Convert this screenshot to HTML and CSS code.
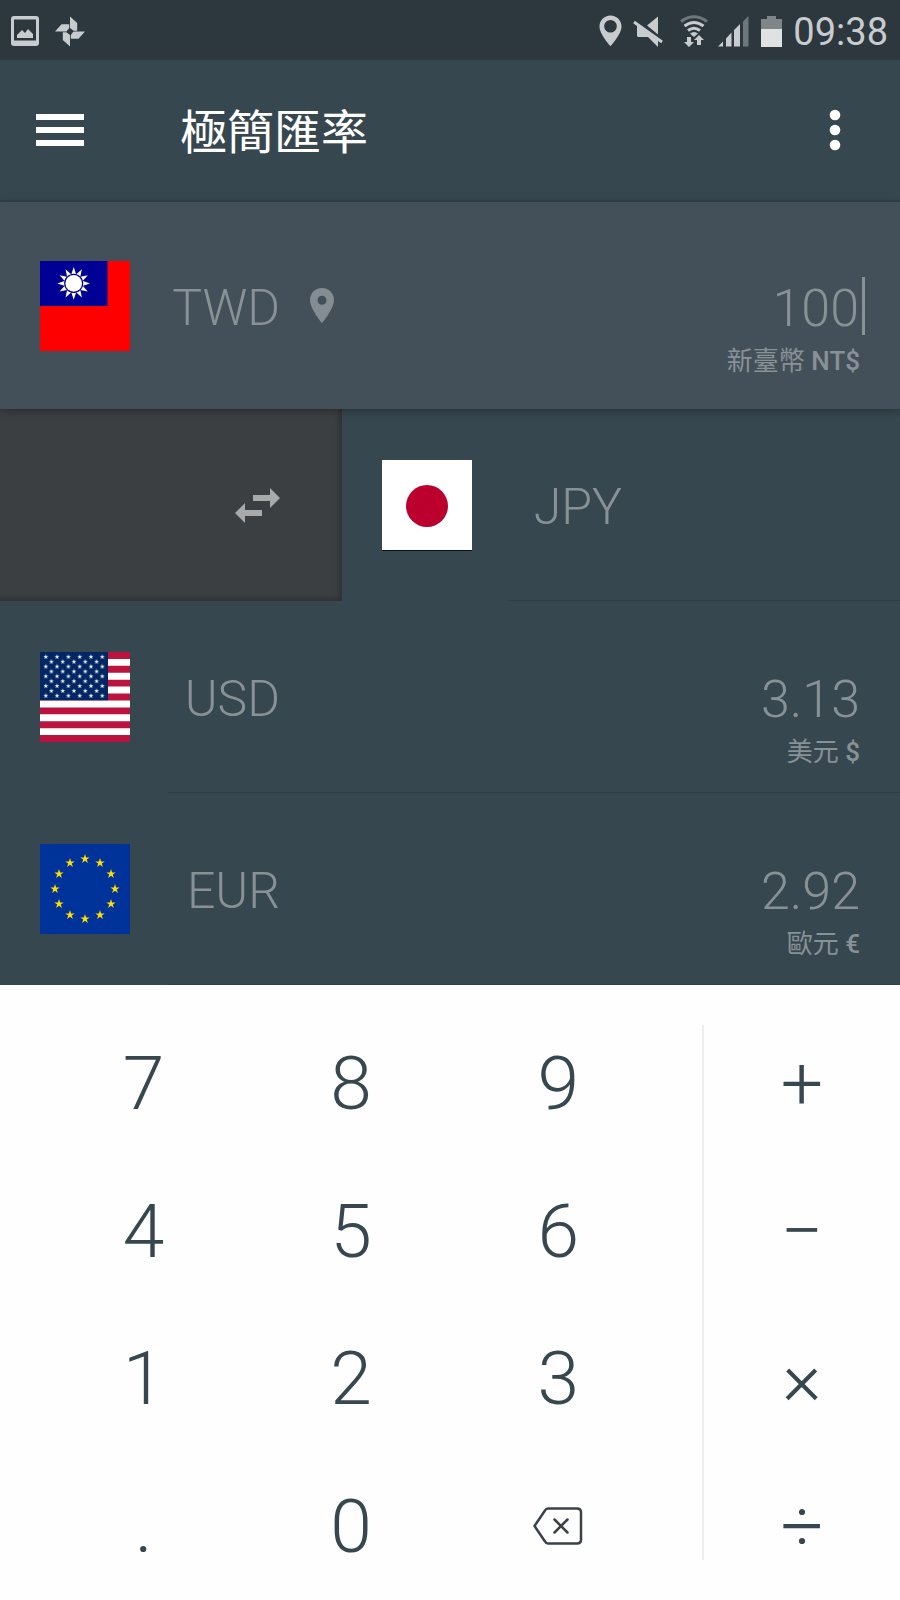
FILE: index.html
```html
<!DOCTYPE html>
<html lang="zh-Hant">
<head>
<meta charset="utf-8">
<meta name="viewport" content="width=device-width, initial-scale=1">
<title>極簡匯率</title>
<link rel="stylesheet" href="styles.css">
</head>
<body>
<div class="app">
  <div class="status">
    <svg class="status-icon" width="28" height="30" viewBox="0 0 28 30"><path fill="#c8ccce" fill-rule="evenodd" d="M3 0h22a3 3 0 0 1 3 3v24a3 3 0 0 1-3 3H3a3 3 0 0 1-3-3V3a3 3 0 0 1 3-3zM3 3.500V24.500H25V3.500zM6 22v-3l5-5 3 3 3-4 5 5v4z"/></svg>
    <svg class="status-icon pinwheel" width="30" height="31" viewBox="0 0 30 31"><g fill="#c8ccce"><path id="blade" d="M15 .500l7.200 6.500v7.700h-3.600L15 12z"/><use href="#blade" transform="rotate(90 15 15.500)"/><use href="#blade" transform="rotate(180 15 15.500)"/><use href="#blade" transform="rotate(270 15 15.500)"/></g></svg>
    <div class="status-right">
      <svg width="23" height="32" viewBox="0 0 23 32"><path fill="#c8ccce" fill-rule="evenodd" d="M11.500 0.500C5 0.500.500 5.500.500 11.500c0 8 11 19.700 11 19.700s11-11.700 11-19.700C22.500 5.500 18 .500 11.500.500zm0 4.500a6.300 6.300 0 1 1 0 12.600 6.300 6.300 0 0 1 0-12.600z"/></svg>
      <svg class="mute" width="30" height="31" viewBox="0 0 30 31"><path fill="#c8ccce" d="M25 .500v18L14 9.500zM4 9l21 14v8L15 21H5l-1-1z"/><path d="M1 6l28 20" stroke="#c8ccce" stroke-width="3"/></svg>
      <svg class="wifi" width="28" height="32" viewBox="0 0 28 32" fill="none" stroke="#c8ccce" stroke-width="3"><path stroke="#6e777c" d="M1 6.500Q14-3 27 6.500"/><path d="M4.500 11q9.500-7 19 0M8 15.500q6-4.500 12 0"/><path fill="#c8ccce" stroke="none" d="M10 18.500q4-3 8 0L14 22zM7 22h4v5h3l-5 5-5-5h3zM17 30v-5h-3l5-5 5 5h-3v5z"/></svg>
      <svg class="signal" width="31" height="31" viewBox="0 0 31 31"><path fill="#c8ccce" d="M0 30.500l5-5v5zM8 30.500v-8l5.500-6v14zM16 30.500V14l6-6v22.500z"/><path fill="#6e777c" d="M25 30.500V5.500L30.500 0v30.500z"/></svg>
      <svg class="battery" width="21" height="31" viewBox="0 0 21 31"><path fill="#7f8688" d="M0 3h6V0h9v3h6v10H0z"/><path fill="#dfe1e3" d="M0 13h21v18H0z"/></svg>
      <time class="clock">09:38</time>
    </div>
  </div>

  <header class="bar">
    <button class="icon-button" aria-label="選單"><svg width="48" height="34" viewBox="0 0 48 34"><path fill="#fff" d="M0 1h48v6H0zM0 14h48v6H0zM0 27h48v6H0z"/></svg></button>
    <h1 class="title">極簡匯率</h1>
    <button class="icon-button more" aria-label="更多"><svg width="12" height="42" viewBox="0 0 12 42" fill="#fff"><circle cx="6" cy="6" r="5.300"/><circle cx="6" cy="21" r="5.300"/><circle cx="6" cy="36" r="5.300"/></svg></button>
  </header>

  <main class="rates">
    <section class="row active">
      <svg class="flag" viewBox="0 0 90 90"><path fill="#f00" d="M0 0h90v90H0z"/><path fill="#000095" d="M0 0h67.500v45H0z"/>
        <g fill="#fff" transform="translate(33.700 22.400)"><circle r="8.300"/><g id="rays"><path id="ray" d="M-2.300-9.300L0-16.300 2.300-9.300Q0-10 -2.300-9.300z"/><use href="#ray" transform="rotate(30)"/><use href="#ray" transform="rotate(60)"/></g><use href="#rays" transform="rotate(90)"/><use href="#rays" transform="rotate(180)"/><use href="#rays" transform="rotate(270)"/></g></svg>
      <label class="code" for="amount">TWD</label>
      <svg class="pin" width="24" height="35" viewBox="0 0 24 35"><path fill="#838d93" fill-rule="evenodd" d="M12 0C5 0 0 5.500 0 12c0 9 12 23 12 23s12-14 12-23C24 5.500 19 0 12 0zm0 7.800a4.500 4.500 0 1 1 0 9 4.500 4.500 0 0 1 0-9z"/></svg>
      <div class="value"><input class="amount entry" id="amount" value="100" inputmode="none" readonly><span class="name">新臺幣 <span class="symbol">NT$</span></span></div>
    </section>

    <section class="row swiped">
      <button class="swap" aria-label="交換"><svg width="45" height="35" viewBox="0 0 45 35"><path fill="#a7a9aa" d="M18 7h17V0l10 10-10 10v-7H18zM27 22H10v-7L0 25l10 10v-7h17z"/></svg></button>
      <div class="row slid">
        <svg class="flag japan" viewBox="0 0 90 90"><path fill="#fff" d="M0 0h90v90H0z"/><circle cx="45" cy="46" r="21" fill="#bc002d"/></svg>
        <span class="code">JPY</span>
      </div>
    </section>

    <section class="row">
      <svg class="flag" viewBox="0 0 90 90"><defs><path id="star" d="M0-1L.225-.309H.951L.363.118.588.809 0 .382-.588.809-.363.118-.951-.309H-.225z"/><pattern id="stars" x="0.200" y="0" width="11.300" height="9.730" patternUnits="userSpaceOnUse"><use href="#star" fill="#fff" transform="translate(5.600 4.900) scale(2.600)"/></pattern><pattern id="stars2" x="5.800" y="4.900" width="11.300" height="9.730" patternUnits="userSpaceOnUse"><use href="#star" fill="#fff" transform="translate(5.600 4.900) scale(2.600)"/></pattern></defs>
        <path fill="#fff" d="M0 0h90v90H0z"/><path stroke="#bb133e" stroke-width="6.920" d="M0 3.460h90M0 17.300h90M0 31.150h90M0 45h90M0 58.850h90M0 72.700h90M0 86.540h90"/><path fill="#002664" d="M0 0h68v48.300H0z"/><path fill="url(#stars)" d="M.200 0h67.800v48.300H.200z"/><path fill="url(#stars2)" d="M5.800 4.900h56.500v38.900H5.800z"/></svg>
      <span class="code">USD</span>
      <div class="value"><output class="amount">3.13</output><span class="name">美元 <span class="symbol">$</span></span></div>
    </section>

    <section class="row">
      <svg class="flag" viewBox="0 0 90 90"><path fill="#039" d="M0 0h90v90H0z"/><g fill="#fd0"><use href="#star" transform="translate(45 15) scale(4.900)"/><use href="#star" transform="translate(60 19) scale(4.900)"/><use href="#star" transform="translate(71 30) scale(4.900)"/><use href="#star" transform="translate(75 45) scale(4.900)"/><use href="#star" transform="translate(71 60) scale(4.900)"/><use href="#star" transform="translate(60 71) scale(4.900)"/><use href="#star" transform="translate(45 75) scale(4.900)"/><use href="#star" transform="translate(30 71) scale(4.900)"/><use href="#star" transform="translate(19 60) scale(4.900)"/><use href="#star" transform="translate(15 45) scale(4.900)"/><use href="#star" transform="translate(19 30) scale(4.900)"/><use href="#star" transform="translate(30 19) scale(4.900)"/></g></svg>
      <span class="code">EUR</span>
      <div class="value"><output class="amount">2.92</output><span class="name">歐元 <span class="symbol">€</span></span></div>
    </section>
  </main>

  <div class="keypad">
    <div class="digits">
      <button class="key">7</button><button class="key">8</button><button class="key">9</button>
      <button class="key">4</button><button class="key">5</button><button class="key">6</button>
      <button class="key">1</button><button class="key">2</button><button class="key">3</button>
      <button class="key">.</button><button class="key">0</button>
      <button class="key" aria-label="刪除"><svg width="50" height="38" viewBox="0 0 50 38" fill="none" stroke="#3b4249" stroke-width="2.500" stroke-linejoin="round" stroke-linecap="round"><path d="M15 1.500h29q4 0 4 4v27q0 4-4 4H15q-2 0-3-2L1.500 19 12 3.500q1-2 3-2zM21.500 12.500l13 13M34.500 12.500l-13 13"/></svg></button>
    </div>
    <div class="divider"></div>
    <div class="operators">
      <button class="key">+</button><button class="key">−</button><button class="key">×</button><button class="key">÷</button>
    </div>
  </div>
</div>
</body>
</html>
```
FILE: styles.css
```css
* {
  box-sizing: border-box;
}

body {
  margin: 0;
  background: #fefefe;
  font-family: Roboto, "Noto Sans CJK TC", sans-serif;
}

button {
  padding: 0;
  border: 0;
  background: none;
  color: inherit;
  font: inherit;
  cursor: pointer;
}

svg {
  display: block;
  flex: none;
}

.app {
  display: flex;
  flex-direction: column;
  min-height: 100vh;
}

.status {
  display: flex;
  align-items: center;
  height: 60px;
  padding: 2px 12px 0 11px;
  background: #2c373e;
  color: #c8ccce;
}

.pinwheel {
  margin-left: 16px;
}

.status-right {
  display: flex;
  align-items: center;
  margin-left: auto;
}

.mute {
  margin-left: 11px;
}

.wifi {
  margin-left: 17px;
}

.signal {
  margin-left: 10px;
}

.battery {
  margin-left: 12px;
}

.clock {
  padding-top: 2px;
  margin-left: 11px;
  font-size: 38px;
  line-height: 44px;
}

.bar {
  display: flex;
  align-items: center;
  height: 142px;
  padding: 0 36px;
  border-bottom: 2px solid #324249;
  background: #37474f;
  color: #fff;
}

.title {
  flex: 1;
  margin: 0 0 0 96px;
  padding-top: 5px;
  font-size: 47px;
  font-weight: 400;
  line-height: 64px;
}

.icon-button {
  display: flex;
}

.more {
  padding: 0 23px;
}

.rates {
  background: #37474f;
  color: #879196;
}

.row {
  position: relative;
  display: flex;
  align-items: center;
  height: 192px;
  padding: 0 40px;
}

.row:not(.swiped):not(.active)::after {
  content: "";
  position: absolute;
  right: 0;
  bottom: 0;
  left: 167px;
  height: 1px;
  background: #303f47;
}

.active {
  z-index: 1;
  height: 207px;
  background: #435059;
  box-shadow: 0 2px 8px rgba(0, 0, 0, 0.3);
}

.swiped {
  padding: 0;
  overflow: hidden;
}

.swap {
  display: flex;
  flex: 0 0 38%;
  align-items: center;
  justify-content: flex-end;
  align-self: stretch;
  padding-right: 62px;
  background: #3b3f42;
  box-shadow: inset -5px -5px 5px -2px rgba(0, 0, 0, 0.2);
}

.slid {
  flex: 1;
}

.flag {
  width: 90px;
  height: 90px;
}

.japan {
  box-shadow: 0 1px 0 #06131c;
}

.code {
  width: 150px;
  padding-top: 4px;
  font-size: 50px;
  font-weight: 300;
  line-height: 60px;
  text-align: right;
}

.pin {
  margin-left: 30px;
}

.value {
  display: flex;
  flex: 1;
  flex-direction: column;
  align-items: flex-end;
  min-width: 0;
  padding-top: 52px;
}

.amount {
  font-size: 52px;
  font-weight: 300;
  line-height: 58px;
}

.entry {
  width: 100%;
  height: 58px;
  margin: -3px -5px 3px 0;
  padding: 6px 3px 0 0;
  border: 0;
  border-right: 3px solid #879196;
  outline: 0;
  background: none;
  color: inherit;
  font-family: inherit;
  text-align: right;
}

.name {
  font-size: 26px;
  line-height: 46px;
}

.symbol {
  font-weight: 500;
}

.keypad {
  display: flex;
  flex: 1;
  padding-top: 24px;
  color: #37474f;
}

.digits {
  display: grid;
  flex: 1;
  grid-template-columns: repeat(3, 1fr);
  grid-auto-rows: 1fr;
  padding: 0 40px;
}

.divider {
  width: 2px;
  margin: 16px -2px 40px 0;
  background: #eee;
}

.operators {
  display: flex;
  flex: 0 0 22%;
  flex-direction: column;
  padding-left: 2px;
}

.key {
  display: flex;
  flex: 1;
  align-items: center;
  justify-content: center;
  font-size: 75px;
  font-weight: 300;
  line-height: 88px;
}
```
